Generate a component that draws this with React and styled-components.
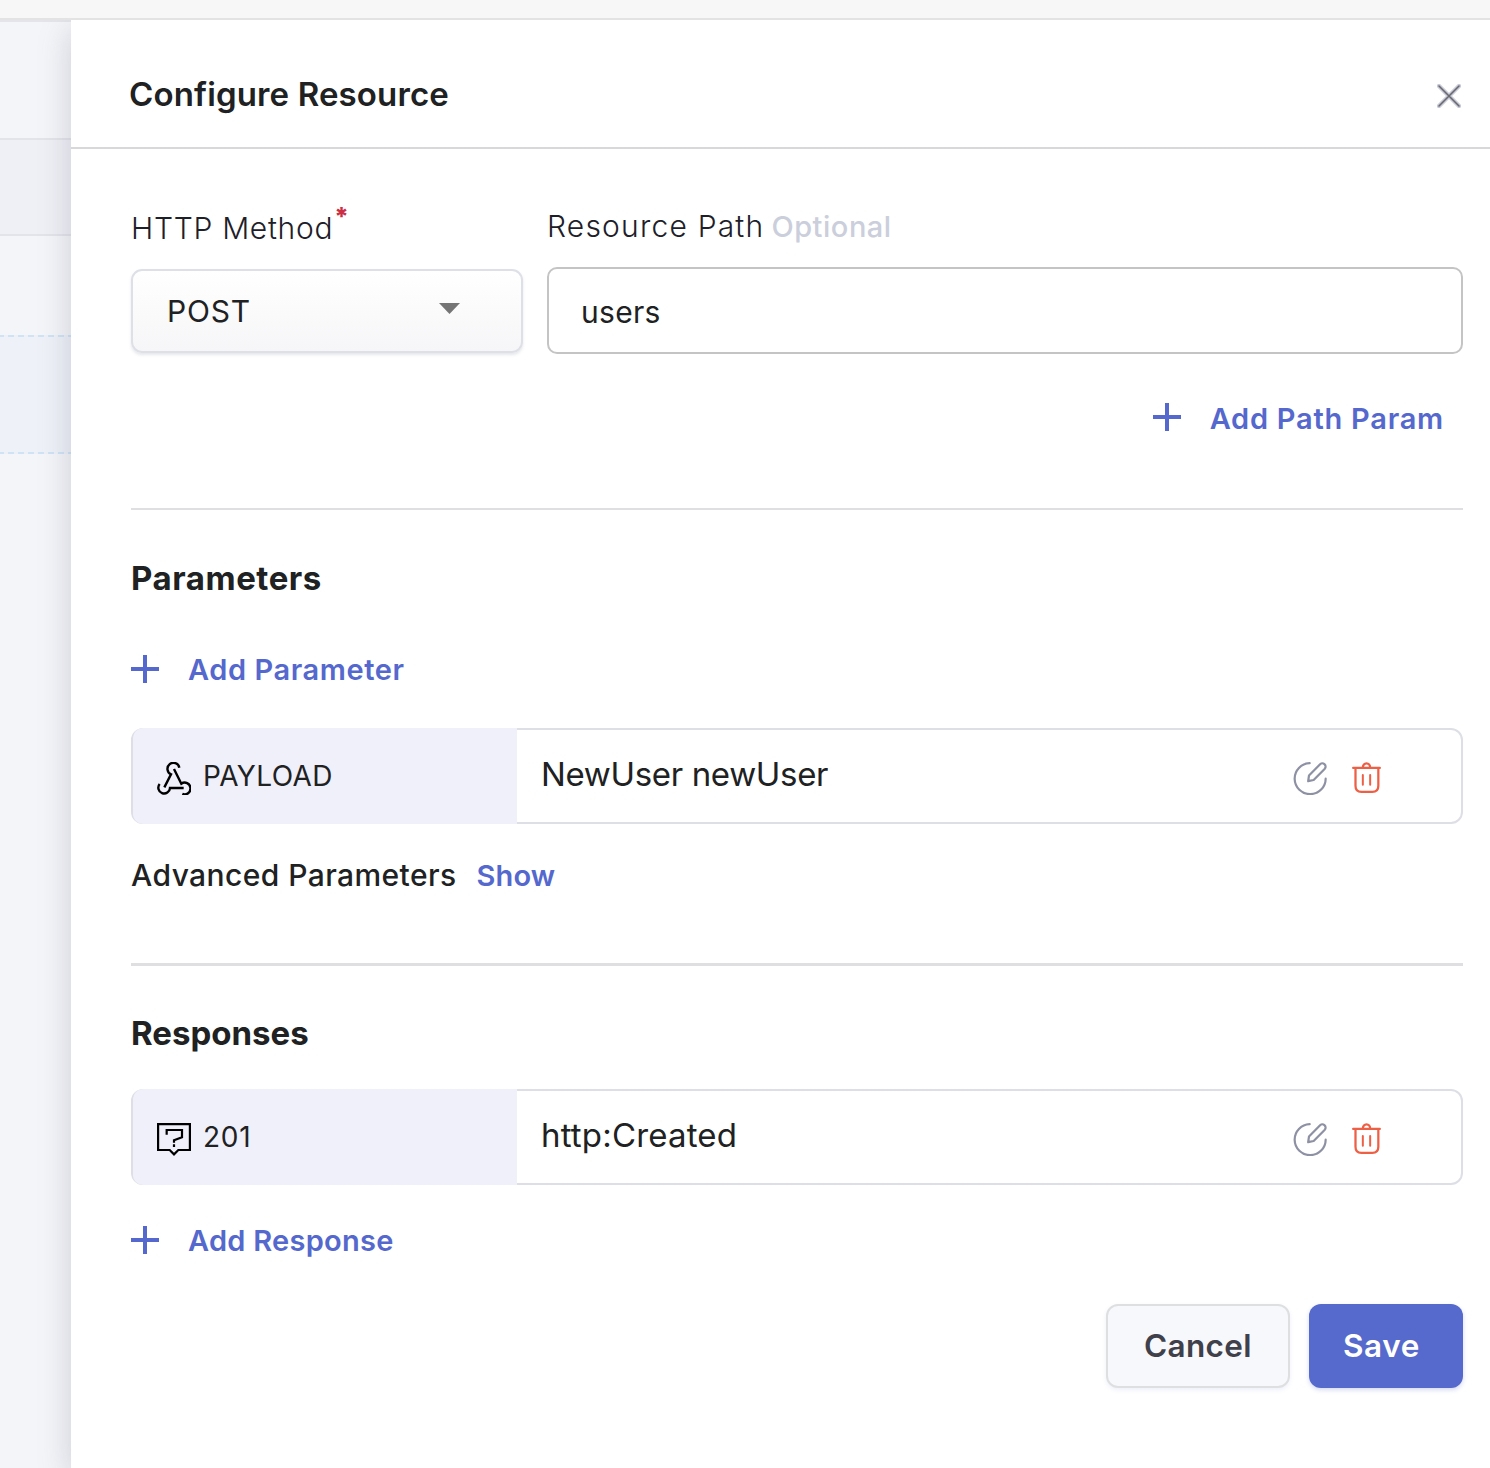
import React from "react";
import styled, { createGlobalStyle } from "styled-components";

const GlobalStyle = createGlobalStyle`
  *, *::before, *::after { box-sizing: border-box; }
  body {
    margin: 0;
    background: #fff;
    color: #202122;
    font-family: Inter, "Open Sans", "Liberation Sans", sans-serif;
  }
  button, input { font-family: inherit; }
`;

const Page = styled.div`
  display: flex;
  flex-direction: column;
  height: 1468px;
  overflow: hidden;
`;

const TopBar = styled.header`
  position: relative;
  z-index: 2;
  flex: none;
  height: 20px;
  background: #f7f7f7;
  border-bottom: 2px solid #e3e3e4;
`;

const Body = styled.div`
  display: flex;
  flex: 1;
  min-height: 0;
`;

const Backdrop = styled.aside`
  flex: none;
  width: 71px;
  background: #f4f5f8;
  border-top: 2px solid #e4e4ea;
`;

const BackdropRow = styled.div`
  height: ${(p) => p.$height}px;
  background: ${(p) => p.$fill || "transparent"};
`;

const SolidRow = styled(BackdropRow)`
  border-top: 2px solid #e3e4e9;
  border-bottom: 2px solid #e3e4e9;
`;

const DashedRule = styled.div`
  height: 2px;
  background: repeating-linear-gradient(90deg, #cfe3f5 0 6px, #edf1f7 6px 10px);
  background-position-x: -2px;
`;

const Panel = styled.main`
  position: relative;
  display: flex;
  flex-direction: column;
  flex: 1;
  background: #fff;
  box-shadow: 0 10px 30px rgba(102, 103, 133, 0.28);
`;

const PanelHeader = styled.div`
  display: flex;
  align-items: flex-start;
  justify-content: space-between;
  height: 129px;
  padding: 54px 29px 0 58px;
  border-bottom: 2px solid #d8d8da;
`;

const Title = styled.h1`
  margin: 0;
  font-size: 33px;
  font-weight: 600;
  line-height: 40px;
  letter-spacing: 0.14px;
`;

const IconButton = styled.button`
  display: flex;
  padding: 0;
  border: 0;
  background: none;
  cursor: pointer;
`;

const CloseButton = styled(IconButton)`
  margin-top: 10px;
`;

const Content = styled.div`
  display: flex;
  flex-direction: column;
  padding: 57px 27px 0 60px;
`;

const Fields = styled.div`
  display: grid;
  grid-template-columns: 392px 1fr;
  column-gap: 24px;
  align-items: start;
`;

const Field = styled.div`
  display: flex;
  flex-direction: column;
  gap: 21px;
  padding-top: ${(p) => p.$drop || 0}px;
`;

const FieldLabel = styled.label`
  display: flex;
  align-items: baseline;
  height: 40px;
  font-size: 30px;
  font-weight: 300;
  line-height: 40px;
  letter-spacing: ${(p) => p.$tracking}px;
  white-space: pre;
  color: #1d2028;
`;

const Required = styled.span`
  align-self: flex-start;
  margin: -12px 0 0 1px;
  font-size: 25px;
  font-weight: 800;
  letter-spacing: 0;
  color: #cb2e45;
`;

const OptionalTag = styled.span`
  margin-left: 7px;
  font-size: 29px;
  font-weight: 500;
  letter-spacing: 0.53px;
  color: #cbcedb;
`;

const Select = styled.button`
  display: flex;
  align-items: center;
  justify-content: space-between;
  height: 84px;
  padding: 0 61px 0 34px;
  border: 2px solid #dfe0e7;
  border-radius: 11px;
  background: linear-gradient(#fff, #f6f6f8);
  box-shadow: 0 2px 3px rgba(102, 103, 133, 0.16);
  color: inherit;
  font-size: 30px;
  letter-spacing: 0.8px;
`;

const Caret = styled.svg`
  margin-top: -5px;
`;

const Input = styled.input`
  width: 100%;
  height: 87px;
  padding: 3px 32px 0;
  border: 2px solid #c4c4c5;
  border-radius: 10px;
  background: #fff;
  color: inherit;
  font-size: 30px;
  letter-spacing: 0.3px;
  outline: none;
`;

const AddButton = styled.button`
  display: flex;
  align-items: center;
  align-self: ${(p) => (p.$end ? "flex-end" : "flex-start")};
  gap: 29px;
  height: 40px;
  margin: ${(p) => p.$margin};
  padding: 0;
  border: 0;
  background: none;
  color: #5568cd;
  font-size: 29px;
  font-weight: 600;
  line-height: 40px;
  letter-spacing: ${(p) => p.$tracking}px;
  cursor: pointer;
`;

const AddLabel = styled.span`
  padding-top: ${(p) => p.$drop || 1}px;
`;

const Divider = styled.hr`
  width: 100%;
  height: ${(p) => p.$weight}px;
  margin: 0;
  border: 0;
  background: #dfdfe1;
`;

const SectionTitle = styled.h2`
  margin: ${(p) => p.$margin};
  font-size: 33px;
  font-weight: 700;
  line-height: 40px;
  letter-spacing: ${(p) => p.$tracking}px;
`;

const Card = styled.div`
  display: flex;
  height: 96px;
  border: 2px solid #dedfe6;
  border-radius: 12px;
`;

const CardTag = styled.div`
  display: flex;
  align-items: center;
  gap: 12px;
  width: 384px;
  margin: -2px 0;
  padding-left: 24px;
  border-radius: 10px 0 0 10px;
  background: #f0f0fb;
  font-size: 28px;
  line-height: 40px;
  letter-spacing: ${(p) => p.$tracking}px;
`;

const TagIcon = styled.svg`
  flex: none;
  margin-top: 5px;
`;

const CardValue = styled.div`
  display: flex;
  align-items: center;
  flex: 1;
  padding: 0 0 4px 24px;
  font-size: 33px;
  line-height: 40px;
  letter-spacing: ${(p) => p.$tracking}px;
`;

const CardActions = styled.div`
  display: flex;
  align-items: flex-start;
  gap: 25px;
  padding: 32px 80px 0 0;
`;

const Advanced = styled.div`
  display: flex;
  align-items: baseline;
  gap: 20px;
  height: 40px;
  margin: 31px 0 68px;
  font-size: 30px;
  font-weight: 500;
  line-height: 40px;
  letter-spacing: 0.42px;
`;

const ShowLink = styled.a`
  color: #5568cd;
  font-size: 29px;
  font-weight: 600;
  letter-spacing: 0.1px;
`;

const Footer = styled.footer`
  display: flex;
  justify-content: flex-end;
  gap: 19px;
`;

const Button = styled.button`
  width: ${(p) => (p.$primary ? 154 : 184)}px;
  height: 84px;
  padding: 0 0 2px ${(p) => (p.$primary ? 34 : 36)}px;
  border: ${(p) => (p.$primary ? "0" : "2px solid #dedfe1")};
  border-radius: 12px;
  background: ${(p) => (p.$primary ? "#5669cc" : "#f7f8fc")};
  box-shadow: 0 2px 4px rgba(85, 104, 205, ${(p) => (p.$primary ? 0.25 : 0.1)});
  color: ${(p) => (p.$primary ? "#fff" : "#40404b")};
  font-size: 31.5px;
  font-weight: 600;
  text-align: left;
  letter-spacing: ${(p) => (p.$primary ? 0.6 : 0.35)}px;
  cursor: pointer;
`;

const CloseIcon = () => (
  <svg width="24" height="24" viewBox="0 0 24 24" fill="none" strokeLinecap="round">
    <path d="M2 2l20 20M22 2L2 22" stroke="#c8c9d8" strokeWidth="4.4" />
    <path d="M2 2l20 20M22 2L2 22" stroke="#68686e" strokeWidth="1.6" />
  </svg>
);

const PlusIcon = () => (
  <svg width="28" height="28" viewBox="0 0 28 28" fill="#5568cd">
    <path d="M12 0h4v12h12v4H16v12h-4V16H0v-4h12z" />
  </svg>
);

const WebhookIcon = () => (
  <TagIcon width="34" height="33" viewBox="0 0 102 99" fill="none" stroke="#000" strokeWidth="7.2">
    <path d="M67 17A18 18 0 1 0 42 37L22 76" />
    <path d="M51 21L73 65A17.5 17.5 0 1 1 76 95.5" />
    <path d="M8 66A17.5 17.5 0 1 0 39 78H80" />
  </TagIcon>
);

const QuestionIcon = () => (
  <TagIcon width="34" height="33" viewBox="0 0 102 99" fill="none" stroke="#000" strokeWidth="6.6">
    <path d="M3.3 3.3H98.700V81H64L51 94L38 81H3.300Z" />
    <path d="M29 35V21H75V43L51 52V59M51 64V72" />
  </TagIcon>
);

const EditIcon = () => (
  <svg width="34" height="33" viewBox="0 0 102 99" fill="none" stroke="#8d91a3" strokeWidth="6.6" strokeLinejoin="round" strokeLinecap="round">
    <path d="M50 3.300A46.500 46.500 0 1 0 98 50" />
    <path d="M45.500 57.500L48 40.500L80.500 7.500A9.300 9.300 0 0 1 95.500 20L62 54Z" />
  </svg>
);

const TrashIcon = () => (
  <svg width="29" height="31" viewBox="0 0 87 93" fill="none" stroke="#ee6045" strokeWidth="6.8" strokeLinecap="round">
    <path d="M3.500 17.800H83.500" />
    <path d="M32.500 17A11 13 0 0 1 54.500 17" />
    <path d="M10.500 19V71Q10.500 89.500 28 89.500H61Q79 89.500 79 71V19" />
    <path d="M32.500 39V68M54.500 39V68" strokeWidth="6" />
  </svg>
);

const AddAction = ({ children, drop, ...rest }) => (
  <AddButton {...rest}>
    <PlusIcon />
    <AddLabel $drop={drop}>{children}</AddLabel>
  </AddButton>
);

const Entry = ({ icon, tag, tagTracking, value, valueTracking }) => (
  <Card>
    <CardTag $tracking={tagTracking}>
      {icon}
      <span>{tag}</span>
    </CardTag>
    <CardValue $tracking={valueTracking}>{value}</CardValue>
    <CardActions>
      <IconButton aria-label="Edit"><EditIcon /></IconButton>
      <IconButton aria-label="Delete"><TrashIcon /></IconButton>
    </CardActions>
  </Card>
);

export default function App() {
  return (
    <>
      <GlobalStyle />
      <Page>
        <TopBar />
        <Body>
          <Backdrop>
            <BackdropRow $height={116} />
            <SolidRow $height={98} $fill="#eff0f5" />
            <BackdropRow $height={99} />
            <DashedRule />
            <BackdropRow $height={115} $fill="#eef1f7" />
            <DashedRule />
          </Backdrop>
          <Panel>
            <PanelHeader>
              <Title>Configure Resource</Title>
              <CloseButton aria-label="Close"><CloseIcon /></CloseButton>
            </PanelHeader>
            <Content>
              <Fields>
                <Field $drop={2}>
                  <FieldLabel $tracking={0.7}>
                    HTTP Method<Required>*</Required>
                  </FieldLabel>
                  <Select>
                    POST
                    <Caret width="21" height="11" viewBox="0 0 21 11" fill="#757575">
                      <path d="M0 0h21L10.500 11z" />
                    </Caret>
                  </Select>
                </Field>
                <Field>
                  <FieldLabel $tracking={1.2}>
                    Resource Path<OptionalTag>Optional</OptionalTag>
                  </FieldLabel>
                  <Input defaultValue="users" />
                </Field>
              </Fields>
              <AddAction $end $tracking={0.76} $margin="43px 19px 71px 0" drop={3}>
                Add Path Param
              </AddAction>
              <Divider $weight={2} />
              <SectionTitle $margin="48px 0 51px" $tracking={0.55}>Parameters</SectionTitle>
              <AddAction $tracking={0.58} $margin="0 0 39px">Add Parameter</AddAction>
              <Entry
                icon={<WebhookIcon />}
                tag="PAYLOAD"
                tagTracking={0.4}
                value="NewUser newUser"
                valueTracking={-0.34}
              />
              <Advanced>
                Advanced Parameters
                <ShowLink>Show</ShowLink>
              </Advanced>
              <Divider $weight={3} />
              <SectionTitle $margin="47px 0 36px" $tracking={0}>Responses</SectionTitle>
              <Entry
                icon={<QuestionIcon />}
                tag="201"
                tagTracking={0.7}
                value="http:Created"
                valueTracking={0.18}
              />
              <AddAction $tracking={0.28} $margin="35px 0 44px">Add Response</AddAction>
              <Footer>
                <Button>Cancel</Button>
                <Button $primary>Save</Button>
              </Footer>
            </Content>
          </Panel>
        </Body>
      </Page>
    </>
  );
}
